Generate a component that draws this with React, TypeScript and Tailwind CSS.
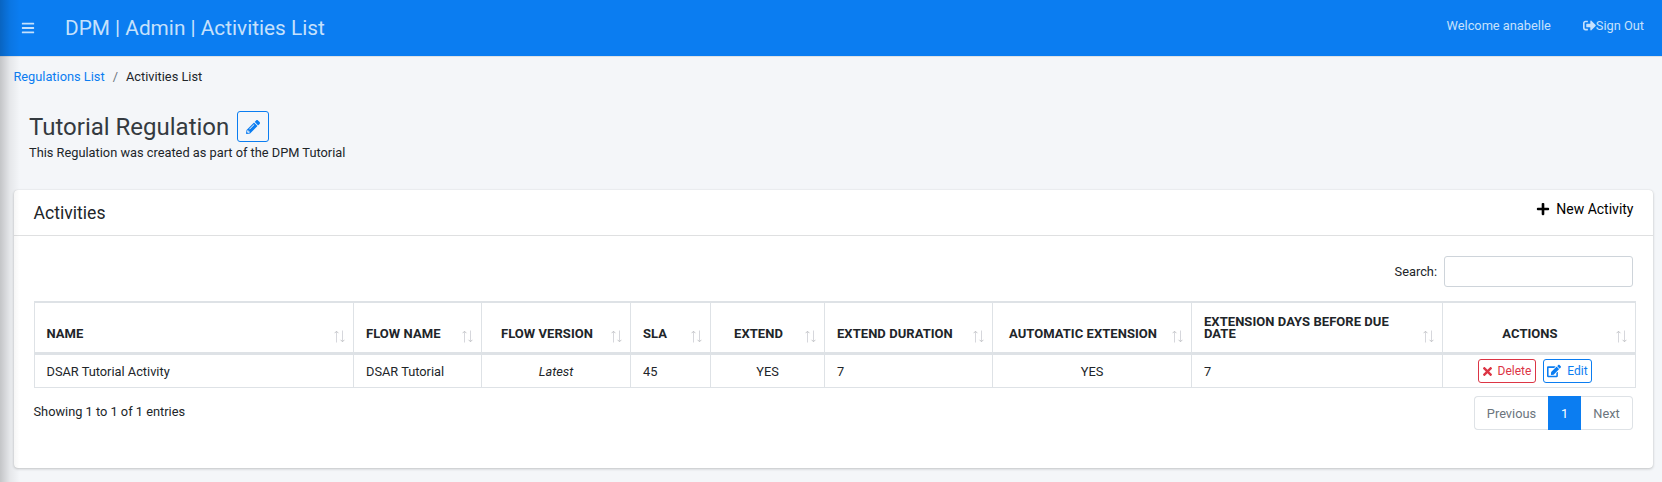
import { FaBars, FaEdit, FaPencilAlt, FaPlus, FaSignOutAlt, FaTimes } from "react-icons/fa";

type Column = { title: string; value: string; width: string; center?: boolean; italic?: boolean };

const columns: Column[] = [
  { title: "NAME", value: "DSAR Tutorial Activity", width: "w-[319px]" },
  { title: "FLOW NAME", value: "DSAR Tutorial", width: "w-[128px]" },
  { title: "FLOW VERSION", value: "Latest", width: "w-[149px]", center: true, italic: true },
  { title: "SLA", value: "45", width: "w-[80px]" },
  { title: "EXTEND", value: "YES", width: "w-[114px]", center: true },
  { title: "EXTEND DURATION", value: "7", width: "w-[168px]" },
  { title: "AUTOMATIC EXTENSION", value: "YES", width: "w-[199px]", center: true },
  { title: "EXTENSION DAYS BEFORE DUE DATE", value: "7", width: "w-[251px]" },
  { title: "ACTIONS", value: "", width: "w-[194px]", center: true },
];

function SortArrows() {
  return (
    <svg className="absolute right-[8.5px] bottom-[9px]" width="11" height="13" viewBox="0 0 11 13" fill="none">
      <path d="M2.5 12.5V1M8.5 0.5V12" stroke="#d6d7dc" strokeWidth="1" />
      <path d="M0.6 3.2L2.5 1.2L4.4 3.2M6.6 9.8L8.5 11.8L10.4 9.8" stroke="#c4c5c8" strokeWidth="1" />
    </svg>
  );
}

function ActivitiesTable() {
  return (
    <table className="w-[1602px] table-fixed border-separate border-spacing-0 border-t-2 border-[#dee2e6]">
      <thead>
        <tr className="h-[52px]">
          {columns.map((c) => (
            <th
              key={c.title}
              className={`${c.width} relative border-b-3 border-l border-[#dee2e6] pr-[30px] pb-[12px] pl-3 align-bottom text-[13px] leading-[12px] font-bold tracking-[0.05px] first:pl-[11.5px] last:border-r ${c.center ? "text-center" : "text-left"}`}
            >
              {c.title}
              <SortArrows />
            </th>
          ))}
        </tr>
      </thead>
      <tbody>
        <tr className="h-[33px]">
          {columns.map((c) => (
            <td
              key={c.title}
              className={`border-b border-l border-[#dee2e6] pr-3 pb-0 pl-3 leading-4 first:pl-[11.5px] last:border-r ${c.title === "ACTIONS" ? "pt-0" : "pt-px"} ${c.center ? "text-center" : "text-left"} ${c.italic ? "italic" : ""}`}
            >
              {c.title === "ACTIONS" ? (
                <div className="flex justify-center gap-[7px] pr-2 text-[12px]">
                  <button className="flex h-6 w-[58px] items-center justify-center gap-[6px] rounded-[3px] border border-[#dc3545] text-[#dc3545]">
                    <FaTimes className="h-[13px] w-[9px]" />
                    Delete
                  </button>
                  <button className="flex h-6 w-[49px] items-center justify-center gap-[6px] rounded-[3px] border border-[#0b7df1] text-[#0b7df1]">
                    <FaEdit className="size-[14px]" />
                    Edit
                  </button>
                </div>
              ) : (
                c.value
              )}
            </td>
          ))}
        </tr>
      </tbody>
    </table>
  );
}

export default function App() {
  return (
    <div className="relative h-[482px] w-[1662px] overflow-hidden bg-[#f4f6f9] font-[Roboto,sans-serif] text-[12.8px] leading-[19px] text-[#212529]">
      <header className="flex h-14 items-center bg-[#0b7df1] text-[#c6e1fc] shadow-[0_1px_0_#dee2e6]">
        <FaBars className="ml-[21px] size-[14px]" />
        <h1 className="ml-[30px] text-[20.8px] leading-7">DPM | Admin | Activities List</h1>
        <nav className="mr-[18px] mb-[5px] ml-auto flex items-center">
          <span>Welcome anabelle</span>
          <a className="ml-8 flex items-center">
            <FaSignOutAlt className="size-[13px]" />
            Sign Out
          </a>
        </nav>
      </header>

      <nav className="flex px-[13.4px] pt-[11px]">
        <a className="text-[#0b7df1]">Regulations List</a>
        <span className="mx-2 text-[#6c757d]">/</span>
        <span>Activities List</span>
      </nav>

      <section className="h-[104px] pt-[25px] pl-[29px]">
        <div className="flex h-[31px] items-center gap-2">
          <h2 className="pt-[2px] text-[24px] leading-[31px] text-[#343a40]">Tutorial Regulation</h2>
          <button className="flex h-[31px] w-8 items-center justify-center rounded-[3px] border border-[#0b7df1] text-[#0b7df1]">
            <FaPencilAlt className="size-[14px]" />
          </button>
        </div>
        <p className="mt-px">This Regulation was created as part of the DPM Tutorial</p>
      </section>

      <main className="ml-[14px] h-[278px] w-[1639px] rounded bg-white shadow-[0_0_1px_rgba(0,0,0,0.125),0_1px_3px_rgba(0,0,0,0.2)]">
        <div className="flex h-[46px] justify-between border-b border-[#dfe0e1] pr-[19.5px] pl-[19.5px]">
          <h3 className="pt-[10px] text-[17.6px] leading-[26px]">Activities</h3>
          <button className="flex h-[38px] items-center gap-[6px] text-[14px] text-black">
            <FaPlus className="size-[14px]" />
            New Activity
          </button>
        </div>
        <div className="flex h-[65px] items-start justify-end pt-5 pr-5">
          <label className="flex items-center gap-[7px]">
            Search:
            <input className="h-[31px] w-[189px] rounded-[3px] border border-[#ced4da] bg-white px-2" />
          </label>
        </div>
        <div className="pl-5">
          <ActivitiesTable />
        </div>
        <div className="flex justify-between pt-2 pr-5 pl-[19.5px]">
          <span className="pt-[6px]">Showing 1 to 1 of 1 entries</span>
          <div className="flex h-[34px] text-[#6c757d]">
            <span className="flex w-[74px] items-center justify-center rounded-l border border-r-0 border-[#dee2e6]">Previous</span>
            <span className="flex w-[33px] items-center justify-center bg-[#0b7df1] text-white">1</span>
            <span className="flex w-[52px] items-center justify-center rounded-r border border-l-0 border-[#dee2e6]">Next</span>
          </div>
        </div>
      </main>
      <div className="pointer-events-none absolute inset-y-0 left-0 w-5 bg-linear-to-r from-black/20 via-black/6 to-transparent" />
    </div>
  );
}
